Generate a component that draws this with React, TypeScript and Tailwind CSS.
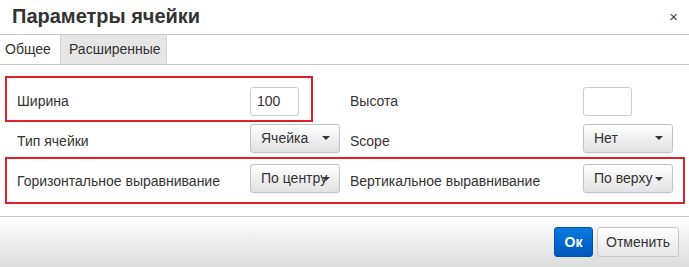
import React from 'react';

const Caret = () => (
  <span className="absolute right-[9px] top-1/2 -translate-y-1/2 w-0 h-0 border-x-[4px] border-x-transparent border-t-[4px] border-t-[#333]" />
);

const Select = ({ value }: { value: string }) => (
  <button className="relative h-[29px] w-[90px] rounded-[3px] border border-[#c4c4c4] bg-gradient-to-b from-white to-[#e2e2e2] pl-[10px] text-left text-[14px] text-[#333] shadow-[0_1px_1px_rgba(0,0,0,0.05)]">
    <span className="block leading-[27px] whitespace-nowrap overflow-hidden">{value}</span>
    <Caret />
  </button>
);

const Input = ({ value }: { value: string }) => (
  <input
    defaultValue={value}
    className="h-[29px] w-[49px] rounded-[3px] border border-[#ccc] bg-white px-[6px] text-[14px] text-[#333] outline-none"
  />
);

const Cell = ({ label, children }: { label: string; children: React.ReactNode }) => (
  <div className="flex items-center">
    <div className="w-[233px] text-[14px] text-[#333]">{label}</div>
    <div className="w-[100px]">{children}</div>
  </div>
);

const App = () => {
  return (
    <div className="w-[689px] h-[267px] bg-white font-['Liberation_Sans',Arial,sans-serif] text-[#333] overflow-hidden">
      {/* Header */}
      <div className="flex h-[35px] items-center justify-between border-b border-[#c8c8c8] pl-[12px] pr-[11px]">
        <h2 className="text-[20px] font-bold leading-none text-[#333] -mt-[2px]">Параметры ячейки</h2>
        <span className="text-[15px] leading-none text-[#444] -mt-[2px]">×</span>
      </div>

      {/* Tabs */}
      <div className="flex h-[30px] border-b border-[#c8c8c8]">
        <div className="flex w-[60px] items-center pl-[5px] text-[14px]">Общее</div>
        <div className="flex w-[107px] items-center border-x border-[#d4d4d4] bg-[#e6e6e6] pl-[8px] text-[14px]">
          Расширенные
        </div>
      </div>

      {/* Body */}
      <div className="relative h-[151px] pt-[16px] pl-[17px]">
        <div className="flex h-10 items-center">
          <Cell label="Ширина">
            <Input value="100" />
          </Cell>
          <Cell label="Высота">
            <Input value="" />
          </Cell>
        </div>
        <div className="flex h-10 items-center">
          <Cell label="Тип ячейки">
            <Select value="Ячейка" />
          </Cell>
          <Cell label="Scope">
            <Select value="Нет" />
          </Cell>
        </div>
        <div className="flex h-[41px] items-center">
          <Cell label="Горизонтальное выравнивание">
            <Select value="По центру" />
          </Cell>
          <Cell label="Вертикальное выравнивание">
            <Select value="По верху" />
          </Cell>
        </div>

        {/* annotation boxes */}
        <div className="pointer-events-none absolute left-[5px] top-[11px] h-[46px] w-[308px] border-2 border-[#e0202b]" />
        <div className="pointer-events-none absolute left-[5px] top-[92px] h-[47px] w-[680px] border-2 border-[#e0202b]" />
      </div>

      {/* Footer */}
      <div className="flex h-[51px] items-center justify-end gap-[4px] border-t border-[#c8c8c8] bg-gradient-to-b from-white to-[#dcdcdc] pr-[10px]">
        <button className="h-[30px] w-[39px] rounded-[3px] border border-[#0052a8] bg-gradient-to-b from-[#0a7be0] to-[#0058bb] text-[14px] font-bold text-white">
          Ок
        </button>
        <button className="h-[30px] w-[82px] rounded-[3px] border border-[#c8c8c8] bg-gradient-to-b from-white to-[#e6e6e6] text-[14px] text-[#333]">
          Отменить
        </button>
      </div>
    </div>
  );
};

export default App;
